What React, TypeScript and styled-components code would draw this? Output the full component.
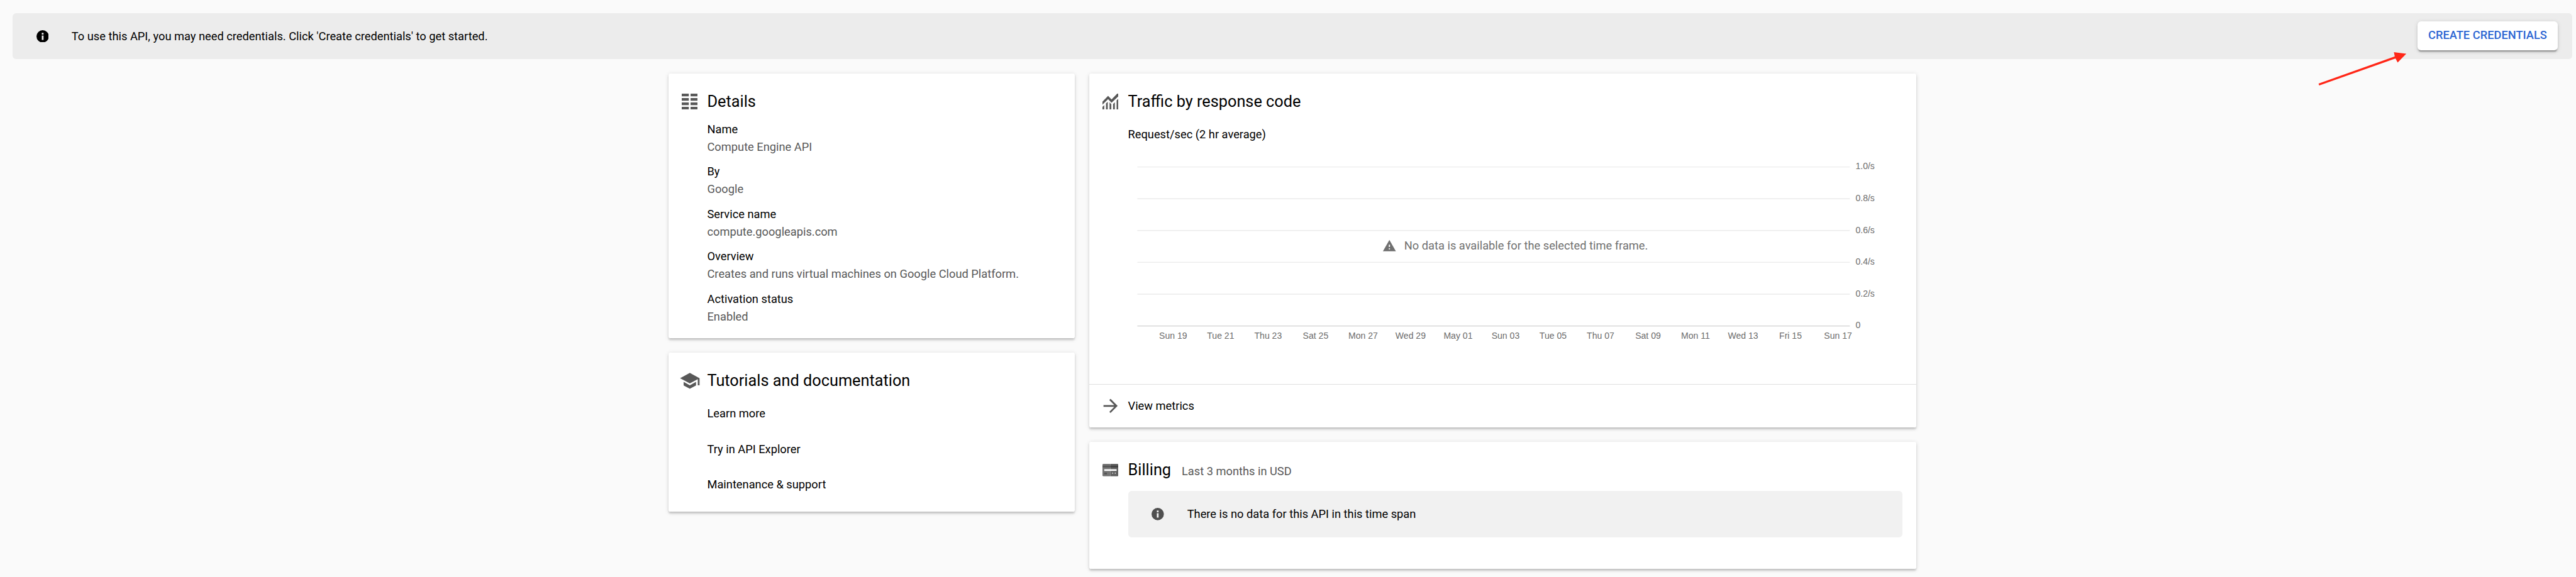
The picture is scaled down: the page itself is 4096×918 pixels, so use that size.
import React from 'react';
import styled, { createGlobalStyle } from 'styled-components';

/* 1rem is ten design pixels; the design is 5828 wide. */
const GlobalStyle = createGlobalStyle`
  *, *::before, *::after { box-sizing: border-box; }
  html { font-size: calc(100vw / 582.8); }
  body {
    margin: 0;
    background: #fafafa;
    color: #000;
    font-family: Roboto, "Liberation Sans", sans-serif;
    overflow: hidden;
  }
`;

const Page = styled.main`
  position: relative;
  width: 100vw;
  height: 100vh;
  padding-top: 3rem;
  font-size: 2.6rem;
  line-height: 4rem;
  overflow: hidden;
`;

const Notice = styled.div<{ $tone: 'banner' | 'muted' }>`
  display: flex;
  align-items: center;
  height: 10.4rem;
  padding: 0 3.4rem 0 5.4rem;
  border-radius: 0.8rem;
  margin: ${(p) => (p.$tone === 'banner' ? '0 0.8rem 0 2.8rem' : '2.4rem 3.2rem 0 8.8rem')};
  background: ${(p) => (p.$tone === 'banner' ? '#ececec' : '#f1f1f1')};
`;

const NoticeText = styled.p`
  flex: 1;
  margin: 0 0 0 5.2rem;
  white-space: nowrap;
`;

const CreateButton = styled.button`
  width: 31.6rem;
  height: 6.6rem;
  margin-bottom: 0.2rem;
  padding: 0;
  border: 0;
  border-radius: 0.8rem;
  background: #fff;
  color: #2c66d3;
  font: 500 2.6rem/6.4rem Roboto, sans-serif;
  white-space: nowrap;
  box-shadow: 0 0.6rem 0.2rem -0.4rem rgba(0, 0, 0, 0.2),
    0 0.4rem 0.4rem rgba(0, 0, 0, 0.14), 0 0.2rem 1rem rgba(0, 0, 0, 0.12);
`;

const Columns = styled.div`
  display: flex;
  gap: 3.2rem;
  margin-top: 3.2rem;
  padding-left: 151.2rem;
`;

const Column = styled.div<{ $width: number }>`
  display: flex;
  flex-direction: column;
  gap: 3.2rem;
  width: ${(p) => p.$width}rem;
`;

const Card = styled.section<{ $height: number }>`
  display: flex;
  flex-direction: column;
  height: ${(p) => p.$height}rem;
  padding-top: 4rem;
  border-radius: 0.4rem;
  background: #fff;
  box-shadow: 0 0.6rem 0.2rem -0.4rem rgba(0, 0, 0, 0.2),
    0 0.4rem 0.4rem rgba(0, 0, 0, 0.14), 0 0.2rem 1rem rgba(0, 0, 0, 0.12);
`;

const CardHeader = styled.header`
  display: flex;
  align-items: center;
  height: 4.8rem;
  flex-shrink: 0;
`;

const IconSlot = styled.span`
  display: flex;
  justify-content: center;
  width: 4.8rem;
  margin: 0 1.6rem 0 2.4rem;
  color: #585858;
`;

const Title = styled.h2`
  margin: 0;
  font-size: 3.6rem;
  font-weight: 400;
  line-height: 4.8rem;
  white-space: nowrap;
`;

const Subtitle = styled.span`
  margin-left: 2.4rem;
  padding-top: 0.6rem;
  color: #585858;
`;

const DetailList = styled.dl`
  display: flex;
  flex-direction: column;
  gap: 1.6rem;
  margin: 1.9rem 0 0 8.8rem;
`;

const Term = styled.dt`
  color: #000;
`;

const Value = styled.dd`
  margin: 0;
  color: #585858;
  white-space: nowrap;
`;

const LinkList = styled.ul`
  margin: 1.1rem 0 0 8.8rem;
  padding: 0;
  list-style: none;
`;

const LinkItem = styled.li`
  line-height: 8rem;
`;

const ChartCaption = styled.p`
  margin: 3.1rem 0 0 8.8rem;
`;

const ChartArea = styled.div`
  position: relative;
  flex: 1;
  margin-left: 8.8rem;
`;

const ChartSvg = styled.svg`
  display: block;
  width: 178.4rem;
  height: 46rem;
`;

const EmptyMessage = styled.div`
  position: absolute;
  top: 21.2rem;
  left: 57.6rem;
  display: flex;
  align-items: center;
  gap: 1.7rem;
  color: #707070;
  white-space: nowrap;
`;

const CardFooter = styled.footer`
  display: flex;
  align-items: center;
  height: 9.8rem;
  border-top: 0.2rem solid #e0e0e0;
`;

const Glyph = styled.svg<{ $w: number; $h: number }>`
  display: block;
  flex-shrink: 0;
  width: ${(p) => p.$w}rem;
  height: ${(p) => p.$h}rem;
`;

const Pointer = styled.svg`
  position: absolute;
  top: 11rem;
  left: 523.8rem;
  width: 22rem;
  height: 9rem;
`;

const InfoIcon = ({ color }: { color: string }) => (
  <Glyph $w={2.8} $h={2.8} viewBox="0 0 28 28" fill={color}>
    <path fillRule="evenodd" d="M14 0a14 14 0 1 0 0 28a14 14 0 1 0 0-28zM12 6h4v4h-4zM12 12h4v10h-4z" />
  </Glyph>
);

const DetailsIcon = () => (
  <Glyph $w={3.6} $h={3.6} viewBox="0 0 36 36" fill="currentColor">
    {[0, 10, 20, 30].map((y) => (
      <path key={y} d={`M0 ${y}h16v6H0zM20 ${y}h16v6H20z`} />
    ))}
  </Glyph>
);

const SchoolIcon = () => (
  <Glyph $w={4.8} $h={4.8} viewBox="0 0 24 24" fill="currentColor">
    <path d="M5 13.18v4L12 21l7-3.82v-4L12 17l-7-3.82zM12 3L1 9l11 6 9-4.91V17h2V9L12 3z" />
  </Glyph>
);

const TrafficIcon = () => (
  <Glyph $w={3.6} $h={3.6} viewBox="0 0 36 36" fill="currentColor">
    <path d="M0 18L12.7 5l7.8 8L33.3 0H36v6L20.5 20.5 12.7 12.3 0 24.8z" />
    <path d="M0 30l4-4v10H0zM8 22l4-3.6V36H8zM16 19.6l4 4.2V36h-4zM24 23.4l4-3.8V36h-4zM32 15.4l4-4V36h-4z" />
  </Glyph>
);

const ArrowIcon = () => (
  <Glyph $w={4.8} $h={4.8} viewBox="0 0 24 24" fill="currentColor">
    <path d="M12 4l-1.41 1.41L16.17 11H4v2h12.17l-5.58 5.59L12 20l8-8z" />
  </Glyph>
);

const BillingIcon = () => (
  <Glyph $w={3.6} $h={2.8} viewBox="0 0 36 28">
    <path fill="#757575" d="M18 0H2a2 2 0 0 0-2 2v24a2 2 0 0 0 2 2h16z" />
    <path fill="#616161" d="M18 0h16a2 2 0 0 1 2 2v24a2 2 0 0 1-2 2H18z" />
    <path fill="#555" d="M0 4h18v4H0zM4 20h6v4H4z" />
    <path fill="#424242" d="M18 4h18v4H18z" />
    <path fill="#fff" d="M4 12h28v4H4zM22 20h2v2h-2zM28 20h2v2h-2z" />
  </Glyph>
);

const WarningIcon = () => (
  <Glyph $w={3.2} $h={3.2} viewBox="0 0 24 24" fill="currentColor">
    <path d="M1 21h22L12 2 1 21zm12-3h-2v-2h2v2zm0-4h-2v-4h2v4z" />
  </Glyph>
);

const details = [
  ['Name', 'Compute Engine API'],
  ['By', 'Google'],
  ['Service name', 'compute.googleapis.com'],
  ['Overview', 'Creates and runs virtual machines on Google Cloud Platform.'],
  ['Activation status', 'Enabled'],
];

const links = ['Learn more', 'Try in API Explorer', 'Maintenance & support'];

const days = [
  'Sun 19', 'Tue 21', 'Thu 23', 'Sat 25', 'Mon 27', 'Wed 29', 'May 01', 'Sun 03',
  'Tue 05', 'Thu 07', 'Sat 09', 'Mon 11', 'Wed 13', 'Fri 15', 'Sun 17',
];

const rates = ['1.0/s', '0.8/s', '0.6/s', '0.4/s', '0.2/s', '0'];

const TrafficChart = () => (
  <ChartSvg viewBox="0 0 1784 460" fontFamily='"Liberation Sans", Arial, sans-serif' fontSize="20" fill="#6c6c6c">
    {rates.map((rate, i) => (
      <g key={rate}>
        <line
          x1="20.5"
          x2="1632.5"
          y1={53.5 + i * 72}
          y2={53.5 + i * 72}
          stroke={i === rates.length - 1 ? '#cfcfcf' : '#ebebeb'}
          strokeWidth="2"
        />
        <text x="1645.5" y={59 + i * 72}>{rate}</text>
      </g>
    ))}
    {days.map((day, i) => (
      <text key={day} x={101.5 + i * 107.45} y="443" textAnchor="middle">{day}</text>
    ))}
  </ChartSvg>
);

export default function App() {
  return (
    <>
      <GlobalStyle />
      <Page>
        <Notice $tone="banner">
          <InfoIcon color="#000" />
          <NoticeText>To use this API, you may need credentials. Click 'Create credentials' to get started.</NoticeText>
          <CreateButton>CREATE CREDENTIALS</CreateButton>
        </Notice>

        <Columns>
          <Column $width={92}>
            <Card $height={60}>
              <CardHeader>
                <IconSlot><DetailsIcon /></IconSlot>
                <Title>Details</Title>
              </CardHeader>
              <DetailList>
                {details.map(([term, value]) => (
                  <div key={term}>
                    <Term>{term}</Term>
                    <Value>{value}</Value>
                  </div>
                ))}
              </DetailList>
            </Card>
            <Card $height={36}>
              <CardHeader>
                <IconSlot><SchoolIcon /></IconSlot>
                <Title>Tutorials and documentation</Title>
              </CardHeader>
              <LinkList>
                {links.map((link) => <LinkItem key={link}>{link}</LinkItem>)}
              </LinkList>
            </Card>
          </Column>

          <Column $width={187.2}>
            <Card $height={80.2}>
              <CardHeader>
                <IconSlot><TrafficIcon /></IconSlot>
                <Title>Traffic by response code</Title>
              </CardHeader>
              <ChartCaption>Request/sec (2 hr average)</ChartCaption>
              <ChartArea>
                <TrafficChart />
                <EmptyMessage>
                  <WarningIcon />
                  <span>No data is available for the selected time frame.</span>
                </EmptyMessage>
              </ChartArea>
              <CardFooter>
                <IconSlot><ArrowIcon /></IconSlot>
                <span>View metrics</span>
              </CardFooter>
            </Card>
            <Card $height={28.8}>
              <CardHeader>
                <IconSlot><BillingIcon /></IconSlot>
                <Title>Billing</Title>
                <Subtitle>Last 3 months in USD</Subtitle>
              </CardHeader>
              <Notice $tone="muted">
                <InfoIcon color="#505050" />
                <NoticeText>There is no data for this API in this time span</NoticeText>
              </Notice>
            </Card>
          </Column>
        </Columns>

        <Pointer viewBox="0 0 220 90" fill="#ff2617">
          <path d="M8 79.8L180.5 18.2 178.5 8.6 206.5 12 187 32 182.2 22.6 9.5 84z" />
        </Pointer>
      </Page>
    </>
  );
}
